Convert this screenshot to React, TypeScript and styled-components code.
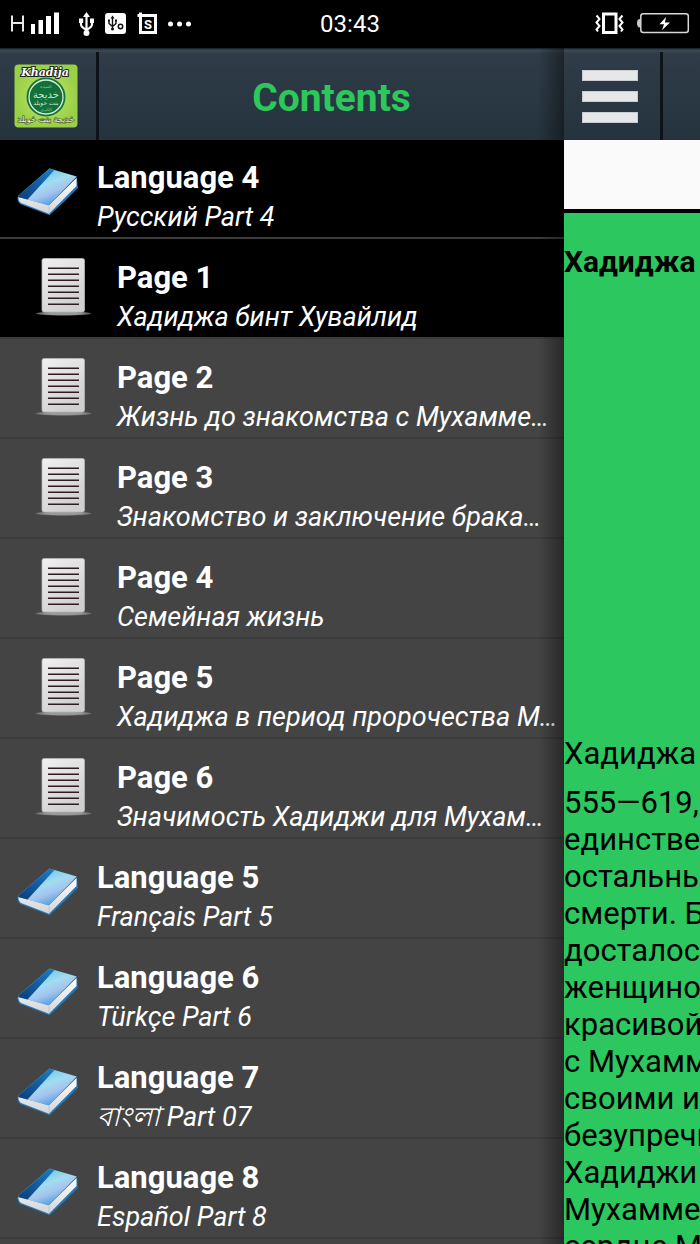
import React from "react";
import styled, { createGlobalStyle } from "styled-components";

const GlobalStyle = createGlobalStyle`
  * { box-sizing: border-box; }
  html, body { margin: 0; height: 100%; background: #000; }
  body { font-family: Roboto, "Noto Sans", "Liberation Sans", sans-serif; overflow: hidden; }
  #root { height: 100%; }
`;

const Screen = styled.div`
  height: 100%;
  min-height: 100vh;
  display: flex;
  flex-direction: column;
  overflow: hidden;
`;

const StatusBar = styled.header`
  flex: none;
  height: 48px;
  display: grid;
  grid-template-columns: 1fr auto 1fr;
  align-items: center;
  padding: 0 10px;
  background: #000;
  color: #fff;
`;

const Clock = styled.time`
  font-size: 24px;
  line-height: 32px;
`;

const StatusEnd = styled.div`
  display: flex;
  justify-content: flex-end;
`;

const Body = styled.div`
  flex: 1;
  min-height: 0;
  display: flex;
`;

const Drawer = styled.nav`
  position: relative;
  flex: 1;
  min-width: 0;
  background: #444;
  overflow: hidden;

  &::after {
    content: "";
    position: absolute;
    top: 0;
    right: 0;
    bottom: 0;
    z-index: 2;
    width: 26px;
    background: linear-gradient(to right, rgba(0, 0, 0, 0), rgba(0, 0, 0, 0.4));
    pointer-events: none;
  }
`;

const Bar = styled.div`
  position: relative;
  z-index: 1;
  display: flex;
  height: 92px;
  padding-top: 4px;
  background: linear-gradient(
    #0d161d 0,
    #2a3740 1px,
    #3d4a55 3px,
    #303c48 5px,
    #2a3844 50%,
    #24333c 100%
  );
`;

const BarCell = styled.div<{ $grow?: boolean }>`
  display: flex;
  align-items: center;
  justify-content: center;
  flex: ${(p) => (p.$grow ? "1" : "none")};
  width: ${(p) => (p.$grow ? "auto" : "99px")};
  padding-right: ${(p) => (p.$grow ? "0" : "4px")};
  border-right: ${(p) => (p.$grow ? "0" : "3px solid #0c1319")};
`;

const DrawerTitle = styled.h1`
  margin: 0;
  padding-top: 4px;
  font-size: 39px;
  line-height: 44px;
  font-weight: 700;
  color: #2dc75c;
`;

const List = styled.ul`
  list-style: none;
  margin: -1px 0 0;
  padding: 0;
`;

const Row = styled.li<{ $active?: boolean }>`
  height: 100px;
  border-bottom: 2px solid #3c3c3c;
  background: ${(p) => (p.$active ? "#000" : "#444")};
`;

const RowLink = styled.a<{ $nested?: boolean }>`
  display: flex;
  gap: ${(p) => (p.$nested ? "24px" : "18px")};
  height: 100%;
  padding: 19px 4px 0 ${(p) => (p.$nested ? "34px" : "16px")};
  color: #fff;
  text-decoration: none;

  svg { flex: none; }
`;

const RowText = styled.span`
  display: flex;
  flex-direction: column;
  min-width: 0;
`;

const RowTitle = styled.span`
  font-size: 31px;
  line-height: 40px;
  font-weight: 700;
`;

const RowNote = styled.span`
  font-size: 27px;
  line-height: 38px;
  font-style: italic;
  white-space: nowrap;
`;

const Reader = styled.main`
  flex: none;
  width: 136px;
  overflow: hidden;
  background: #2dc75f;
`;

const MenuButton = styled.button`
  display: flex;
  flex-direction: column;
  justify-content: center;
  gap: 10px;
  height: 100%;
  width: 56px;
  padding: 0;
  margin: 0;
  border: 0;
  background: none;
`;

const MenuLine = styled.span`
  height: 11px;
  background: #e6e7e9;
  border: 1px solid #c9cdd1;
`;

const Banner = styled.div`
  height: 73px;
  background: #fafafa;
  border-bottom: 4px solid #000;
`;

const Article = styled.article`
  width: 100vw;
  color: #000;
  font-size: 31px;
  line-height: 37px;
`;

const ArticleTitle = styled.h2`
  margin: 0;
  padding-top: 30px;
  font-size: 30px;
  line-height: 37px;
  font-weight: 700;
`;

const Portrait = styled.div`
  height: 455px;
`;

const Paragraph = styled.p`
  margin: 0 0 12px;
  white-space: pre-line;
`;

function SignalIcons() {
  return (
    <svg width="184" height="32" viewBox="10 8 184 32" role="img" aria-label="Signal and notifications">
      <path d="M12 15.500v16M23 15.500v16M12 23h11" stroke="#e8e8e8" strokeWidth="2" fill="none" />
      <path d="M31 24h4v10h-4zM38.500 20h4.500v14h-4.500zM46 16h5v18h-5zM54 12.500h5v21.500h-5z" fill="#fff" />
      <g stroke="#fff" fill="none" strokeWidth="2.200">
        <path d="M86.500 15v18M81 20v4.500q0 2.500 5.500 5.500M92 20v4.500q0 2.500-5.500 5.500" />
      </g>
      <path d="M86.500 12l3.500 5h-7zM79 18.500h4.200v4.500H79zM90 18.500h4v4.500h-4z" fill="#fff" />
      <circle cx="86.500" cy="33" r="3" fill="#fff" />
      <rect x="105" y="13" width="21" height="21" rx="3" fill="#fff" />
      <path d="M112.500 17v12M109 20v3.500l3.500 3 3.500-3V20" stroke="#111" strokeWidth="1.400" fill="none" />
      <path d="M112.500 15.500l2 3h-4zM108 19.500h2v2h-2zM115 19.500h2v2h-2z" fill="#111" />
      <circle cx="112.500" cy="29" r="1.500" fill="#111" />
      <circle cx="120.500" cy="26.500" r="2.200" stroke="#111" strokeWidth="1.500" fill="none" />
      <path d="M137.500 15.500h18v17h-15v-20" stroke="#fff" strokeWidth="3" fill="none" />
      <text x="148" y="28.500" textAnchor="middle" fontFamily="Roboto, sans-serif" fontWeight="700" fontSize="13" fill="#fff">S</text>
      <g fill="#fff">
        <circle cx="170.500" cy="24" r="2.500" />
        <circle cx="179.500" cy="24" r="2.500" />
        <circle cx="188.500" cy="24" r="2.500" />
      </g>
    </svg>
  );
}

function PowerIcons() {
  return (
    <svg width="96" height="32" viewBox="594 8 96 32" role="img" aria-label="Vibrate, charging">
      <rect x="603.500" y="14" width="12.500" height="18.500" stroke="#fff" strokeWidth="3" fill="none" />
      <path d="M596.500 15.500l3 3.500-3 3.500 3 3.500-3 3.500 1.500 2M622.500 15.500l-3 3.500 3 3.500-3 3.500 3 3.500-1.500 2" stroke="#fff" strokeWidth="2" fill="none" />
      <rect x="640.800" y="13.800" width="47.500" height="18.600" rx="2.500" stroke="#d8d8d8" strokeWidth="1.500" fill="none" />
      <path d="M640 19q-3 0-3 4.200t3 4.200z" fill="#c8c8c8" />
      <path d="M666 17l-6.500 7.200h4.500l-2 6 8-7.800h-5z" fill="#fff" />
    </svg>
  );
}

function Logo() {
  return (
    <svg width="64" height="64" viewBox="0 0 64 64" role="img" aria-label="Khadija">
      <defs>
        <radialGradient id="logoBg">
          <stop offset="0.400" stopColor="#b4e05a" />
          <stop offset="1" stopColor="#98d048" />
        </radialGradient>
      </defs>
      <rect x="0.500" y="0.500" width="63" height="63" rx="4" fill="url(#logoBg)" />
      <circle cx="32" cy="33" r="19.500" fill="#14733c" />
      <circle cx="32" cy="33" r="17" fill="#12703a" stroke="#d9efd9" strokeWidth="1.300" />
      <g textAnchor="middle" fontFamily="DejaVu Sans, sans-serif" fill="#cfe8d2">
        <text x="32" y="24" fontSize="4" opacity="0.700">السيدة</text>
        <text x="32" y="34" fontSize="10">خديجة</text>
        <text x="32" y="41" fontSize="6">بنت خويلد</text>
        <text x="32" y="47" fontSize="4" opacity="0.700">الكبرى</text>
      </g>
      <text x="31" y="12" textAnchor="middle" fontFamily="DejaVu Serif, serif" fontStyle="italic" fontWeight="700" fontSize="11" fill="#fff" stroke="#222" strokeWidth="2" paintOrder="stroke">Khadija</text>
      <text x="32" y="58" textAnchor="middle" fontFamily="DejaVu Sans, sans-serif" fontSize="8" fill="#e4efce" stroke="#5a6a40" strokeWidth="1.500" paintOrder="stroke">خديجة بنت خويلد</text>
    </svg>
  );
}

function BookIcon() {
  return (
    <svg width="63" height="60" viewBox="16 158 63 60" aria-hidden="true">
      <defs>
        <linearGradient id="cover" x1="0.200" y1="0.100" x2="0.700" y2="0.900">
          <stop offset="0" stopColor="#5cc0ec" />
          <stop offset="0.450" stopColor="#a3dcf0" />
          <stop offset="0.700" stopColor="#a4c4ee" />
          <stop offset="1" stopColor="#4b9fe0" />
        </linearGradient>
        <linearGradient id="spine" x1="1" y1="0" x2="0" y2="1">
          <stop offset="0" stopColor="#1c7cc4" />
          <stop offset="1" stopColor="#0a3d7c" />
        </linearGradient>
        <linearGradient id="leaves" x1="0" y1="0" x2="0" y2="1">
          <stop offset="0" stopColor="#ffffff" />
          <stop offset="1" stopColor="#d4d4d8" />
        </linearGradient>
      </defs>
      <path d="M17.500 197L49 205 77 177 77.500 185 78.300 187.500 65 201 49.500 215.300 20 204Q17 201 17.500 197z" fill="#2676b4" />
      <path d="M18.500 197L49 205 76.500 178 76.500 186 49 213.800 21 203Q18 200.500 18.500 197z" fill="url(#leaves)" />
      <path d="M49 206v7.500" stroke="#c4c4c8" strokeWidth="1" />
      <path d="M49.500 168.500L76.800 176.500 48.500 205.500 20 197.500Q17.500 197 18.500 195.500z" fill="url(#cover)" />
      <path d="M49.500 168.500L54.500 170 27.500 199.500 20 197.500Q17.500 197 18.500 195.500z" fill="url(#spine)" />
    </svg>
  );
}

function PageIcon() {
  return (
    <svg width="59" height="60" viewBox="34 258 59 60" aria-hidden="true">
      <defs>
        <linearGradient id="sheet" x1="0" y1="0" x2="0.600" y2="1">
          <stop offset="0" stopColor="#f1f1f1" />
          <stop offset="1" stopColor="#cfcfcf" />
        </linearGradient>
        <radialGradient id="ground">
          <stop offset="0.600" stopColor="#9a9a9a" />
          <stop offset="1" stopColor="#8f8f8f" stopOpacity="0.500" />
        </radialGradient>
      </defs>
      <ellipse cx="63.500" cy="313.500" rx="28" ry="2.200" fill="url(#ground)" />
      <rect x="42" y="258.500" width="42.500" height="53.500" rx="2" fill="url(#sheet)" stroke="#b5b5b5" strokeWidth="0.800" />
      <path d="M48 268.300h31M48 274.300h31M48 280.300h31M48 286.300h31M48 292.300h31M48 298.300h31M48 304.300h31" stroke="#2c1d20" strokeWidth="1.400" />
    </svg>
  );
}

type Entry = { title: string; note: string; nested?: boolean; active?: boolean };

const entries: Entry[] = [
  { title: "Language 4", note: "Русский Part 4", active: true },
  { title: "Page 1", note: "Хадиджа бинт Хувайлид", nested: true, active: true },
  { title: "Page 2", note: "Жизнь до знакомства с Мухамме…", nested: true },
  { title: "Page 3", note: "Знакомство и заключение брака…", nested: true },
  { title: "Page 4", note: "Семейная жизнь", nested: true },
  { title: "Page 5", note: "Хадиджа в период пророчества М…", nested: true },
  { title: "Page 6", note: "Значимость Хадиджи для Мухам…", nested: true },
  { title: "Language 5", note: "Français Part 5" },
  { title: "Language 6", note: "Türkçe Part 6" },
  { title: "Language 7", note: "বাংলা Part 07" },
  { title: "Language 8", note: "Español Part 8" },
];

const story = [
  "555—619,",
  "единстве",
  "остальнь",
  "смерти. Б",
  "досталос",
  "женщино",
  "красивой",
  "с Мухамм",
  "своими и",
  "безупречн",
  "Хадиджи",
  "Мухамме",
  "сердце М",
].join("\n");

export default function App() {
  return (
    <>
      <GlobalStyle />
      <Screen>
        <StatusBar>
          <SignalIcons />
          <Clock>03:43</Clock>
          <StatusEnd>
            <PowerIcons />
          </StatusEnd>
        </StatusBar>
        <Body>
          <Drawer aria-label="Contents">
            <Bar>
              <BarCell>
                <Logo />
              </BarCell>
              <BarCell $grow>
                <DrawerTitle>Contents</DrawerTitle>
              </BarCell>
            </Bar>
            <List>
              {entries.map((e) => (
                <Row key={e.title} $active={e.active}>
                  <RowLink href="#" $nested={e.nested}>
                    {e.nested ? <PageIcon /> : <BookIcon />}
                    <RowText>
                      <RowTitle>{e.title}</RowTitle>
                      <RowNote>{e.note}</RowNote>
                    </RowText>
                  </RowLink>
                </Row>
              ))}
            </List>
          </Drawer>
          <Reader>
            <Bar>
              <BarCell>
                <MenuButton aria-label="Toggle contents">
                  <MenuLine />
                  <MenuLine />
                  <MenuLine />
                </MenuButton>
              </BarCell>
            </Bar>
            <Banner />
            <Article>
              <ArticleTitle>Хадиджа</ArticleTitle>
              <Portrait />
              <Paragraph>Хадиджа</Paragraph>
              <Paragraph>{story}</Paragraph>
            </Article>
          </Reader>
        </Body>
      </Screen>
    </>
  );
}
